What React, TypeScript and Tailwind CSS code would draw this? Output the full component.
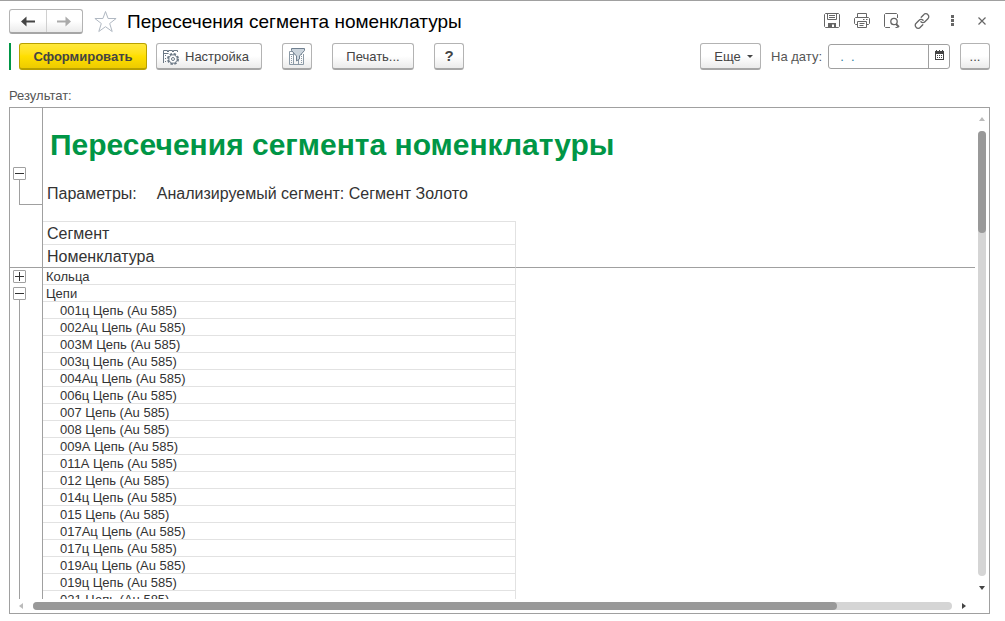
import { useState } from "react";
import type { ReactNode } from "react";

const items = [
    "001ц Цепь (Au 585)",
    "002Ац Цепь (Au 585)",
    "003М Цепь (Au 585)",
    "003ц Цепь (Au 585)",
    "004Ац Цепь (Au 585)",
    "006ц Цепь (Au 585)",
    "007 Цепь (Au 585)",
    "008 Цепь (Au 585)",
    "009А Цепь (Au 585)",
    "011А Цепь (Au 585)",
    "012 Цепь (Au 585)",
    "014ц Цепь (Au 585)",
    "015 Цепь (Au 585)",
    "017Ац Цепь (Au 585)",
    "017ц Цепь (Au 585)",
    "019Ац Цепь (Au 585)",
    "019ц Цепь (Au 585)",
    "021 Цепь (Au 585)",
];

const buttonBase =
    "flex h-[27px] shrink-0 items-center rounded-[3px] border border-b-2 border-[#b3b3b3] border-b-[#a6a6a6] bg-linear-to-b from-white from-50% to-[#ebebeb] pt-px text-[13px] text-[#444]";

function Button({ className, label, children }: { className: string; label?: string; children: ReactNode }) {
    return (
        <button type="button" aria-label={label} className={`${buttonBase} ${className}`}>
            {children}
        </button>
    );
}

function IconButton({ label, children }: { label: string; children: ReactNode }) {
    return (
        <button type="button" aria-label={label} className="flex h-5 w-[30px] items-center justify-center text-[#666]">
            {children}
        </button>
    );
}

function Toggle({ open, label, onClick }: { open: boolean; label: string; onClick?: () => void }) {
    return (
        <button
            type="button"
            aria-label={label}
            aria-expanded={open}
            onClick={onClick}
            className="block size-[13px] shrink-0 rounded-[1px] border border-[#a0a0a0] bg-white"
        >
            <svg viewBox="0 0 11 11" className="block size-[11px]" stroke="#333" shapeRendering="crispEdges">
                <path d={open ? "M1 5.5h9" : "M1 5.5h9M5.5 1v9"} />
            </svg>
        </button>
    );
}

function SaveIcon() {
    return (
        <svg width="16" height="16" viewBox="0 0 16 16" fill="none" stroke="currentColor">
            <path d="M1.500.500h13l1 1v12l-1 1h-13l-1-1v-12zM3.500 1v5.500h9V1M5 2.500h6M5 4.500h6" />
            <path d="M4 10h8v5H4z" fill="currentColor" stroke="none" />
            <path d="M8 11.500h2V14H8z" fill="#fff" stroke="none" />
        </svg>
    );
}

function PrintIcon() {
    return (
        <svg width="16" height="16" viewBox="0 0 16 16" fill="none" stroke="currentColor">
            <path d="M3.500 4.500v-4h9v4M3.500 11.500h-2l-1-1v-5l1-1h13l1 1v5l-1 1h-2" />
            <path d="M3.500 8.500h9v6h-9zM5.500 10.500h5M5.500 12.500h4M9 6.500h1.500M12 6.500h1.500" />
        </svg>
    );
}

function PreviewIcon() {
    return (
        <svg width="16" height="16" viewBox="0 0 16 16" fill="none" stroke="currentColor">
            <path d="M6 14.500H1.500l-1-1v-12l1-1h11l1 1V5M13.500 13.500v1h-2" />
            <circle cx="10" cy="8.500" r="3.200" strokeWidth="1.300" />
            <path d="M12 11l3 3" strokeWidth="1.800" />
        </svg>
    );
}

function LinkIcon() {
    return (
        <svg width="16" height="16" viewBox="0 0 16 16" fill="none" stroke="currentColor" strokeWidth="1.300" strokeLinecap="round">
            <path d="M7.200 4.200l2.500-2.500a2.700 2.700 0 0 1 4.200 0a2.700 2.700 0 0 1 0 4l-3 3a2.700 2.700 0 0 1-4 0" />
            <path d="M8.800 11.800l-2.500 2.500a2.700 2.700 0 0 1-4.200 0a2.700 2.700 0 0 1 0-4l3-3a2.700 2.700 0 0 1 4 0" />
        </svg>
    );
}

function SettingsIcon() {
    return (
        <svg width="17" height="16" viewBox="0 0 17 16" fill="none" stroke="#6b7885">
            <path d="M.5 14V1.500h4V3M5.500 3V1.500h4V3M10.500 3V1.500h4V3M.5 4.500h5M2.500 6v1M2.500 9v1M2.500 12v1" />
            <circle cx="10" cy="10" r="5" strokeWidth="2" strokeDasharray="2.400 1.530" />
            <circle cx="10" cy="10" r="4.200" fill="#fff" />
            <circle cx="10" cy="10" r="1.500" />
        </svg>
    );
}

function FilterIcon() {
    return (
        <svg width="16" height="17" viewBox="0 0 16 17" fill="none" stroke="#8b99a5">
            <path d="M4 3.500H.500v13h14V6M.5 6.500h5M4.500 4v12M9.500 12v4" />
            <path d="M2.500 6v10M12.500 6v10" strokeDasharray="1 1" />
            <path d="M2.500.500h13v2L10.500 8v3l-3 2V8l-5-5.500z" fill="#cbd4dc" stroke="#708090" />
        </svg>
    );
}

function CalendarIcon() {
    return (
        <svg width="9" height="10" viewBox="0 0 9 10" fill="#444" shapeRendering="crispEdges">
            <path fillRule="evenodd" d="M0 1h9v9H0zM1 4v5h7V4z" />
            <path d="M1 0h1v1H1zM4 0h1v1H4zM7 0h1v1H7zM2 5h1v1H2zM4 5h1v1H4zM6 5h1v1H6zM2 7h1v1H2zM4 7h1v1H4zM6 7h1v1H6z" />
        </svg>
    );
}

function Header() {
    return (
        <header className="flex items-center pt-2">
            <div className="flex h-[25px] w-[74px] shrink-0 rounded-[3px] border border-b-2 border-[#b3b3b3] border-b-[#a6a6a6] bg-linear-to-b from-white from-50% to-[#ebebeb]">
                <button type="button" aria-label="Назад" className="flex flex-1 items-center justify-center border-r border-[#d0d0d0] text-[#444]">
                    <svg width="14" height="11" viewBox="0 0 14 11" fill="currentColor">
                        <path d="M0 5.500L5.500 .500v4H14v2H5.500v4z" />
                    </svg>
                </button>
                <button type="button" aria-label="Вперед" className="flex flex-1 items-center justify-center text-[#aaa]">
                    <svg width="14" height="11" viewBox="0 0 14 11" fill="currentColor">
                        <path d="M14 5.500L8.500 .500v4H0v2h8.500v4z" />
                    </svg>
                </button>
            </div>
            <button type="button" aria-label="В избранное" className="ml-[11px] shrink-0">
                <svg width="23" height="23" viewBox="0 0 23 23" fill="#fff" stroke="#b0b8c2">
                    <path d="M11.500 1.500l2.600 7h8l-6.400 5 2.500 8-6.700-4.800-6.700 4.800 2.500-8-6.400-5h8z" />
                </svg>
            </button>
            <h1 className="ml-[10px] flex-1 whitespace-nowrap text-[19px] leading-6 text-black">Пересечения сегмента номенклатуры</h1>
            <div className="-mr-[7px] flex pb-[2px]">
                <IconButton label="Сохранить"><SaveIcon /></IconButton>
                <IconButton label="Печать"><PrintIcon /></IconButton>
                <IconButton label="Предварительный просмотр"><PreviewIcon /></IconButton>
                <IconButton label="Получить ссылку"><LinkIcon /></IconButton>
                <IconButton label="Меню">
                    <svg width="3" height="11" viewBox="0 0 3 11" fill="currentColor">
                        <path d="M0 0h3v3H0zM0 4h3v3H0zM0 8h3v3H0z" />
                    </svg>
                </IconButton>
                <IconButton label="Закрыть">
                    <svg width="8" height="8" viewBox="0 0 8 8" stroke="currentColor" strokeWidth="1.200">
                        <path d="M.5.500l7 7M7.500.500l-7 7" />
                    </svg>
                </IconButton>
            </div>
        </header>
    );
}

function Toolbar() {
    const [date, setDate] = useState("  .  .");

    return (
        <div className="mt-[9px] flex items-center">
            <span className="h-[27px] w-[2px] shrink-0 bg-[#009646]" />
            <button
                type="button"
                className="ml-2 h-[27px] w-32 shrink-0 rounded-[3px] border border-b-2 border-[#b8a000] bg-linear-to-b from-[#ffe83a] via-[#ffdf00] to-[#edcb00] pt-px text-[13px] font-bold text-[#444]"
            >
                Сформировать
            </button>
            <Button className="ml-[9px] w-[106px] gap-[5px] pl-[6px]">
                <SettingsIcon />
                Настройка
            </Button>
            <Button className="ml-5 w-[30px] justify-center" label="Отбор"><FilterIcon /></Button>
            <Button className="ml-5 w-[82px] justify-center">Печать...</Button>
            <Button className="ml-5 w-[30px] justify-center text-[15px] font-bold" label="Справка">?</Button>
            <div className="flex-1" />
            <Button className="w-[61px] justify-center gap-[6px] pl-[6px]">
                Еще
                <svg width="6" height="3" viewBox="0 0 6 3" fill="#444"><path d="M0 0h6L3 3z" /></svg>
            </Button>
            <label htmlFor="date" className="ml-[10px] whitespace-nowrap text-[13px] text-[#555]">На дату:</label>
            <div className="ml-[6px] flex h-[25px] w-[122px] shrink-0 rounded-[3px] border border-[#a0a0a0] bg-white">
                <input
                    id="date"
                    value={date}
                    onChange={(e) => setDate(e.target.value)}
                    className="min-w-0 flex-1 whitespace-pre pt-px pl-1 text-[13px] text-[#2f7f9f] outline-none"
                />
                <button type="button" aria-label="Выбрать дату" className="flex w-[21px] items-center justify-center border-l border-[#a0a0a0] pb-[3px]">
                    <CalendarIcon />
                </button>
            </div>
            <Button className="ml-[10px] w-[30px] justify-center">...</Button>
        </div>
    );
}

function Report() {
    const [open, setOpen] = useState(true);

    return (
        <div className="flex min-h-0 flex-1 overflow-hidden">
            <div className="flex w-[33px] shrink-0 flex-col border-r border-[#a0a0a0]">
                <div className="h-[160px] shrink-0 border-b border-[#a0a0a0] pt-[59px]">
                    <div className="pl-[3px]"><Toggle open label="Свернуть заголовок" /></div>
                    <div className="ml-[9px] h-[25px] border-b border-l border-[#a0a0a0]" />
                </div>
                <div className="h-[17px] shrink-0 py-[2px] pl-[3px]"><Toggle open={false} label="Кольца" /></div>
                <div className="h-[15px] shrink-0 pt-[2px] pl-[3px]">
                    <Toggle open={open} label="Цепи" onClick={() => setOpen(!open)} />
                </div>
                {open && <div className="ml-[9px] flex-1 border-l border-[#a0a0a0]" />}
            </div>
            <div className="min-w-0 flex-1 text-[#333]">
                <div className="h-[113px] overflow-hidden whitespace-nowrap">
                    <h2 className="pt-[19px] pl-[7px] text-[30px] leading-9 font-bold text-[#009646]">Пересечения сегмента номенклатуры</h2>
                    <p className="flex gap-5 pt-[21px] pl-1 text-base leading-5">
                        <span>Параметры:</span>
                        <span>Анализируемый сегмент: Сегмент Золото</span>
                    </p>
                </div>
                <table className="w-full table-fixed border-separate border-spacing-0 text-left">
                    <thead className="text-base leading-5">
                        <tr>
                            <th className="h-[23px] w-[473px] border-t border-r border-[#e2e2e2] p-0 pt-[2px] pl-1 font-normal">Сегмент</th>
                            <td className="p-0" />
                        </tr>
                        <tr>
                            <th className="h-6 border-t border-r border-b border-[#e2e2e2] border-b-[#a0a0a0] p-0 pt-[2px] pl-1 font-normal">Номенклатура</th>
                            <td className="border-b border-[#a0a0a0] p-0" />
                        </tr>
                    </thead>
                    <tbody className="text-[13px] leading-[15px]">
                        {["Кольца", "Цепи"].map((name) => (
                            <tr key={name}>
                                <td className="h-[17px] border-r border-b border-[#e2e2e2] p-0 pt-px pl-[3px]">{name}</td>
                            </tr>
                        ))}
                        {open && items.map((name) => (
                            <tr key={name}>
                                <td className="h-[17px] border-r border-b border-[#e2e2e2] p-0 pt-px pl-[17px]">{name}</td>
                            </tr>
                        ))}
                    </tbody>
                </table>
            </div>
        </div>
    );
}

function VerticalScroll() {
    return (
        <div className="flex w-[14px] shrink-0 flex-col items-center pt-[9px] pb-[9px]">
            <svg width="6" height="4" viewBox="0 0 6 4" fill="#bbb"><path d="M0 4h6L3 0z" /></svg>
            <div className="my-[10px] w-2 flex-1 rounded-full bg-[#d5d5d5]">
                <div className="h-[23%] rounded-full bg-[#999]" />
            </div>
            <svg width="6" height="4" viewBox="0 0 6 4" fill="#444"><path d="M0 0h6L3 4z" /></svg>
        </div>
    );
}

function HorizontalScroll() {
    return (
        <div className="flex h-[14px] shrink-0 items-center pr-[23px] pl-[9px]">
            <svg width="4" height="6" viewBox="0 0 4 6" fill="#bbb"><path d="M4 0v6L0 3z" /></svg>
            <div className="mx-[10px] h-2 flex-1 rounded-full bg-[#d5d5d5]">
                <div className="h-2 w-[87.5%] rounded-full bg-[#999]" />
            </div>
            <svg width="4" height="6" viewBox="0 0 4 6" fill="#444"><path d="M0 0v6l4-3z" /></svg>
        </div>
    );
}

export default function App() {
    return (
        <div className="flex h-screen flex-col border-t border-[#a0a0a0] bg-white pr-[15px] pb-[7px] pl-[9px] font-['Liberation_Sans',Arial,sans-serif]">
            <Header />
            <Toolbar />
            <p className="mt-[17px] mb-[3px] text-[13px] leading-[17px] text-[#555]">Результат:</p>
            <main className="flex min-h-0 flex-1 flex-col border border-[#a0a0a0]">
                <div className="flex min-h-0 flex-1">
                    <Report />
                    <VerticalScroll />
                </div>
                <HorizontalScroll />
            </main>
        </div>
    );
}
